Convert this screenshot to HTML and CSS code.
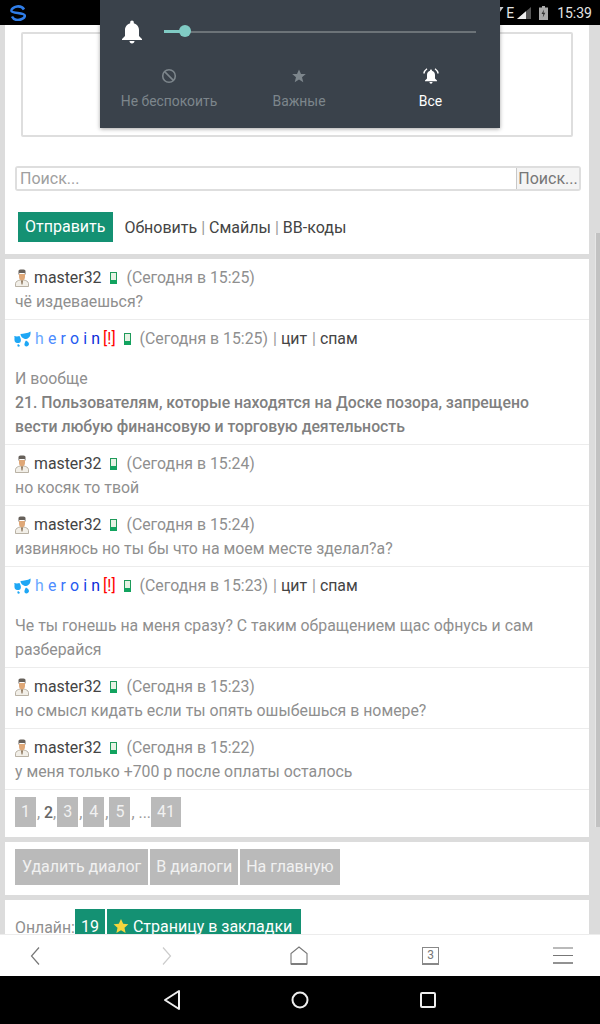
FILE: index.html
```html
<!DOCTYPE html>
<html lang="ru">
<head>
    <meta charset="UTF-8">
    <meta name="viewport" content="width=device-width, initial-scale=1.0">
    <title>Диалог</title>
    <link rel="stylesheet" href="styles.css">
</head>
<body>
    <div class="status-bar">
        <svg class="app-logo" width="16" height="16" viewBox="0 0 16 16" fill="none" stroke="#2f7de8" stroke-width="2.600">
            <path d="M14 4.500C12.500 2 9.500 1.200 7 1.500C3.500 2 1.200 4 1.500 6C2 8.300 14.500 7.700 14.800 10.500C15 13 11 15 8 15C5 15 3 13.500 2 11.500"/>
        </svg>
        <div class="status-right">
            <svg class="wifi" width="6" height="5" viewBox="0 0 6 5"><path d="M0 0H5.500L2 5H0Z" fill="#ddd"/></svg>
            <span class="net">E</span>
            <svg width="14" height="12" viewBox="0 0 14 12"><path d="M14 0V12H0Z" fill="#555"/><path d="M9 4.300V12H0Z" fill="#eee"/></svg>
            <svg class="battery" width="9" height="14" viewBox="0 0 9 14"><path d="M3 0H6V1.500H9V14H0V1.500H3Z" fill="#aaa"/><path d="M5 3.500L2.500 8H4.300L3.800 11.500L6.300 6.800H4.500Z" fill="#333"/></svg>
            <span class="clock">15:39</span>
        </div>
    </div>

    <div class="page">
        <div class="block top-block">
            <div class="ad-box"></div>
            <form class="search">
                <input class="search-input" type="text" placeholder="Поиск...">
                <button class="search-button" type="button">Поиск...</button>
            </form>
            <div class="actions">
                <a class="btn green">Отправить</a>
                <span class="links"><a>Обновить</a> <i>|</i> <a>Смайлы</a> <i>|</i> <a>BB-коды</a></span>
            </div>
        </div>

        <div class="block messages">
            <div class="post">
                <div class="post-head">
                    <svg class="avatar" width="16" height="18" viewBox="0 0 16 18"><use href="#user-ico"/></svg>
                    <a class="nick">master32</a>
                    <svg class="phone" width="7" height="12" viewBox="0 0 7 12"><use href="#phone-ico"/></svg>
                    <span class="time">(Сегодня в 15:25)</span>
                </div>
                <div class="post-text">чё издеваешься?</div>
            </div>
            <div class="post">
                <div class="post-head">
                    <svg class="drops" width="17" height="16" viewBox="0 0 17 16"><use href="#drops-ico"/></svg>
                    <a class="nick-color"><b class="c1">h</b><b class="c2">e</b><b class="c3">r</b><b class="c4">o</b><b class="c5">i</b><b class="c6">n</b></a><span class="warn">[!]</span>
                    <svg class="phone" width="7" height="12" viewBox="0 0 7 12"><use href="#phone-ico"/></svg>
                    <span class="time">(Сегодня в 15:25)</span><i class="sep">|</i><a class="act">цит</a><i class="sep">|</i><a class="act">спам</a>
                </div>
                <div class="post-text spaced">И вообще<br><strong>21. Пользователям, которые находятся на Доске позора, запрещено вести любую финансовую и торговую деятельность</strong></div>
            </div>
            <div class="post">
                <div class="post-head">
                    <svg class="avatar" width="16" height="18" viewBox="0 0 16 18"><use href="#user-ico"/></svg>
                    <a class="nick">master32</a>
                    <svg class="phone" width="7" height="12" viewBox="0 0 7 12"><use href="#phone-ico"/></svg>
                    <span class="time">(Сегодня в 15:24)</span>
                </div>
                <div class="post-text">но косяк то твой</div>
            </div>
            <div class="post">
                <div class="post-head">
                    <svg class="avatar" width="16" height="18" viewBox="0 0 16 18"><use href="#user-ico"/></svg>
                    <a class="nick">master32</a>
                    <svg class="phone" width="7" height="12" viewBox="0 0 7 12"><use href="#phone-ico"/></svg>
                    <span class="time">(Сегодня в 15:24)</span>
                </div>
                <div class="post-text">извиняюсь но ты бы что на моем месте зделал?а?</div>
            </div>
            <div class="post">
                <div class="post-head">
                    <svg class="drops" width="17" height="16" viewBox="0 0 17 16"><use href="#drops-ico"/></svg>
                    <a class="nick-color"><b class="c1">h</b><b class="c2">e</b><b class="c3">r</b><b class="c4">o</b><b class="c5">i</b><b class="c6">n</b></a><span class="warn">[!]</span>
                    <svg class="phone" width="7" height="12" viewBox="0 0 7 12"><use href="#phone-ico"/></svg>
                    <span class="time">(Сегодня в 15:23)</span><i class="sep">|</i><a class="act">цит</a><i class="sep">|</i><a class="act">спам</a>
                </div>
                <div class="post-text spaced">Че ты гонешь на меня сразу? С таким обращением щас офнусь и сам разберайся</div>
            </div>
            <div class="post">
                <div class="post-head">
                    <svg class="avatar" width="16" height="18" viewBox="0 0 16 18"><use href="#user-ico"/></svg>
                    <a class="nick">master32</a>
                    <svg class="phone" width="7" height="12" viewBox="0 0 7 12"><use href="#phone-ico"/></svg>
                    <span class="time">(Сегодня в 15:23)</span>
                </div>
                <div class="post-text">но смысл кидать если ты опять ошыбешься в номере?</div>
            </div>
            <div class="post">
                <div class="post-head">
                    <svg class="avatar" width="16" height="18" viewBox="0 0 16 18"><use href="#user-ico"/></svg>
                    <a class="nick">master32</a>
                    <svg class="phone" width="7" height="12" viewBox="0 0 7 12"><use href="#phone-ico"/></svg>
                    <span class="time">(Сегодня в 15:22)</span>
                </div>
                <div class="post-text">у меня только +700 р после оплаты осталось</div>
            </div>
            <div class="pager">
                <a class="btn grey">1</a><span class="comma">, <b>2</b>,</span><a class="btn grey">3</a><span class="comma">,</span><a class="btn grey">4</a><span class="comma">,</span><a class="btn grey">5</a><span class="comma dots">, ...</span><a class="btn grey">41</a>
            </div>
        </div>

        <div class="block button-row">
            <a class="btn grey">Удалить диалог</a>
            <a class="btn grey narrow">В диалоги</a>
            <a class="btn grey narrow">На главную</a>
        </div>

        <div class="block online">
            <span class="online-label">Онлайн:</span>
            <a class="btn green">19</a>
            <a class="btn green bookmark"><svg class="star" width="16" height="16" viewBox="0 0 16 16"><path d="M8 1L10.200 5.800L15.400 6.300L11.500 9.800L12.600 15L8 12.300L3.400 15L4.500 9.800L.6 6.300L5.800 5.800Z" fill="#f5d63d"/></svg> Страницу в закладки</a>
        </div>
    </div>

    <div class="scrollbar"></div>

    <div class="browser-bar">
        <svg width="14" height="18" viewBox="0 0 14 18" fill="none" stroke="#777" stroke-width="1.200"><path d="M11 0.500L3.500 9L11 17.500"/></svg>
        <svg width="14" height="18" viewBox="0 0 14 18" fill="none" stroke="#ccc" stroke-width="1.200"><path d="M3 0.500L10.500 9L3 17.500"/></svg>
        <svg width="18" height="19" viewBox="0 0 18 19" fill="none" stroke="#777" stroke-width="1.100"><path d="M1 18V7.500L9 1L17 7.500V18Z"/><path d="M1 18H17" stroke-width="1.800"/></svg>
        <span class="tabs">3</span>
        <svg width="20" height="17" viewBox="0 0 20 17" fill="none" stroke="#777" stroke-width="1.100"><path d="M0 1H20M0 8.500H20"/><path d="M0 16H20" stroke-width="1.600"/></svg>
    </div>

    <div class="nav-bar">
        <svg width="18" height="22" viewBox="0 0 18 22" fill="none" stroke="#eee" stroke-width="2"><path d="M16 2V20L2 11Z" stroke-linejoin="round"/></svg>
        <svg width="20" height="20" viewBox="0 0 20 20" fill="none" stroke="#eee" stroke-width="2"><circle cx="10" cy="10" r="7.500"/></svg>
        <svg width="18" height="18" viewBox="0 0 18 18" fill="none" stroke="#eee" stroke-width="2"><rect x="2" y="2" width="14" height="14" rx="1"/></svg>
    </div>

    <!-- шторка громкости поверх страницы -->
    <div class="volume-panel">
        <div class="volume-row">
            <svg width="22" height="24" viewBox="0 0 22 24"><path d="M11 0.500C12 0.500 12.800 1.300 12.800 2.300V3.200C16 4 18 6.800 18 10V16L21 19V20H1V19L4 16V10C4 6.800 6 4 9.200 3.200V2.300C9.200 1.300 10 0.500 11 0.500ZM8.500 21H13.500C13.500 22.500 12.400 23.500 11 23.500C9.600 23.500 8.500 22.500 8.500 21Z" fill="#fff"/></svg>
            <div class="slider">
                <div class="slider-fill"></div>
                <div class="slider-knob"></div>
            </div>
        </div>
        <div class="mode-row">
            <div class="mode">
                <svg width="16" height="16" viewBox="0 0 16 16" fill="none" stroke="#7d868c" stroke-width="1.600"><circle cx="8" cy="8" r="6.300"/><path d="M3.600 3.600L12.400 12.400"/></svg>
                <span>Не беспокоить</span>
            </div>
            <div class="mode">
                <svg width="16" height="16" viewBox="0 0 16 16"><path d="M8 1.500L10 6H14.800L11 9.200L12.300 14.200L8 11.400L3.700 14.200L5 9.200L1.200 6H6Z" fill="#7d868c"/></svg>
                <span>Важные</span>
            </div>
            <div class="mode active">
                <svg width="18" height="16" viewBox="0 1 18 16"><path d="M9 2.500C9.700 2.500 10 3 10 3.700C12.300 4.300 13 6.300 13 8V11.500L15 13.500V14.200H3V13.500L5 11.500V8C5 6.300 5.700 4.300 8 3.700C8 3 8.300 2.500 9 2.500ZM7.500 15H10.500C10.500 16 9.800 16.700 9 16.700C8.200 16.700 7.500 16 7.500 15Z" fill="#fff"/><path d="M5 1.800C3.300 3 2.200 4.600 1.800 6.500M13 1.800C14.700 3 15.800 4.600 16.200 6.500" fill="none" stroke="#fff" stroke-width="1.300"/></svg>
                <span>Все</span>
            </div>
        </div>
    </div>

    <svg class="defs" width="0" height="0">
        <defs>
            <g id="user-ico">
                <path d="M0.500 17.500V14.500C0.500 12.500 3 11.500 5 11H9C11 11.500 13.500 12.500 13.500 14.500V17.500Z" fill="#f2efe8" stroke="#a8a090" stroke-width=".8"/>
                <path d="M4 5H10V8C10 10 8.500 11.500 7 11.500C5.500 11.500 4 10 4 8Z" fill="#dfa878"/>
                <path d="M3.500 6V2C3.500 0.800 5 0.500 7 0.500C9 0.500 10.500 0.800 10.500 2V6L9.500 4H4.500Z" fill="#66605a"/>
                <path d="M6 11.500H8L7.500 15.500H6.500Z" fill="#8a7358"/>
            </g>
            <g id="phone-ico">
                <rect x="0.500" y="0.500" width="6" height="11" fill="#e6f2e4" stroke="#1f9a5a"/>
                <rect x="0" y="8" width="7" height="4" fill="#12a35f"/>
            </g>
            <g id="drops-ico">
                <path d="M16.500 0.500C17 4 15.500 7.500 12 8C9 8 6.500 5.500 6.500 3C9.500 2.500 13.500 2.500 16.500 0.500Z" fill="#1ea7f5"/>
                <path d="M5.500 5C6.500 7 7.500 9 6.500 11C5.500 12.500 2 12.500 0.800 10.500C0 8.500 1 6.500 0.200 5C2 5.500 4 5.500 5.500 5Z" fill="#1ea7f5"/>
                <path d="M12 9.500C13.500 10.500 15 11.500 15 13.300C14.800 15 12.500 16 11 15C9.800 14 10.500 11.500 12 9.500Z" fill="#1ea7f5"/>
                <path d="M4 13C5 13.500 6 14.200 5.800 15C5.300 16 3.800 16 3.400 15C3.200 14.400 3.500 13.700 4 13Z" fill="#1ea7f5"/>
            </g>
        </defs>
    </svg>
</body>
</html>
```

FILE: styles.css
```css
html, body {
    margin: 0;
    padding: 0;
    height: 100%;
}
body {
    font-family: 'Roboto', sans-serif;
    font-size: 15.850px;
    background-color: #dcdcdc;
    color: #8f8f8f;
    height: 1024px;
    overflow: hidden;
    display: flex;
    flex-direction: column;
    position: relative;
}
a {
    color: #444;
    text-decoration: none;
}
i {
    font-style: normal;
}

/* Статус-бар */
.status-bar {
    height: 25px;
    flex: none;
    background-color: #000;
    display: flex;
    justify-content: space-between;
    align-items: center;
    padding: 0 8px 0 10px;
}
.status-right {
    display: flex;
    align-items: center;
    color: #e4e4e4;
}
.wifi {
    margin: -6px 2px 0 0;
}
.net {
    font-size: 14px;
    margin-right: 3px;
}
.battery {
    margin: 0 0 0 8px;
}
.clock {
    font-size: 14px;
    margin-left: 9px;
}

/* Страница */
.page {
    flex: 1;
    min-height: 0;
    overflow: hidden;
    padding: 0 11px 0 5px;
    display: flex;
    flex-direction: column;
    gap: 5px;
}
.block {
    background-color: #fff;
    flex: none;
}
.top-block {
    height: 229px;
    box-sizing: border-box;
    padding: 7px 10px 0;
}
.ad-box {
    height: 101px;
    margin: 0 6px;
    border: 2px solid #dedede;
    border-radius: 2px;
}
.search {
    display: flex;
    margin: 29px -2px 0 0;
    border: 2px solid #dedede;
    border-radius: 3px;
    box-sizing: border-box;
    height: 25px;
}
.search-input {
    flex: 1;
    min-width: 0;
    border: none;
    padding: 0 3px;
    font-family: inherit;
    font-size: 16px;
    outline: none;
}
.search-input::placeholder {
    color: #a0a0a0;
}
.search-button {
    width: 63px;
    padding: 0;
    border: none;
    border-left: 1px solid #c8c8c8;
    background-color: #f4f4f4;
    color: #777;
    font-family: inherit;
    font-size: 16px;
}
.actions {
    margin: 21px 0 0 3px;
    display: flex;
    align-items: center;
}
.btn {
    display: inline-block;
    height: 30px;
    line-height: 30px;
    padding: 0 6px;
    font-size: 16px;
    color: #fff;
}
.green {
    background-color: #149173;
}
.grey {
    background-color: #bababa;
    color: #f1f1f1;
}
.actions .btn {
    padding: 0 8px 0 7px;
}
.links {
    margin-left: 11px;
    font-size: 16px;
    color: #999;
}

/* Сообщения */
.post {
    padding: 7px 10px 0;
    border-bottom: 1px solid #ececec;
    line-height: 24px;
}
.post-head {
    display: flex;
    align-items: center;
    height: 24px;
    white-space: pre;
}
.post-text {
    padding-bottom: 5px;
    max-width: 540px;
}
.post-text strong {
    font-weight: 500;
    font-size: 15.800px;
    color: #808080;
}
.spaced {
    padding-top: 16px;
}
.avatar {
    margin-right: 3px;
}
.drops {
    margin: 0 4px 0 -1px;
}
.nick-color b {
    font-weight: 400;
    margin-right: 4.200px;
}
.nick-color .c1 { color: #6aa8ff; }
.nick-color .c2 { color: #4d8cff; }
.nick-color .c3 { color: #3a74fa; }
.nick-color .c4 { color: #255af0; }
.nick-color .c5 { color: #1440e6; }
.nick-color .c6 { color: #0a28d8; margin-right: 3px; }
.warn {
    color: #f00;
    margin-right: -1px;
}
.phone {
    margin: 0 9px 0 9px;
}
.sep {
    color: #999;
    margin: 0 4px 0 5px;
}
.act {
    color: #444;
}
.pager {
    padding: 7px 10px 8px;
    display: flex;
    font-size: 15.850px;
    line-height: 32px;
}
.pager b {
    font-weight: 500;
    color: #666;
}
.comma {
    color: #999;
    padding: 0 1px;
    white-space: pre;
}
.comma.dots {
    padding-right: 0;
}
.button-row {
    box-sizing: border-box;
    padding: 7px 10px 0;
    height: 53px;
    display: flex;
    gap: 2px;
}
.button-row .btn {
    height: 36px;
    line-height: 36px;
    padding: 0 7px;
}
.button-row .narrow {
    padding: 0 6px;
}
.online {
    padding: 9px 10px 0;
    height: 60px;
    display: flex;
    gap: 2px;
    align-items: flex-start;
}
.online-label {
    line-height: 38px;
    margin-right: -2px;
}
.online .btn {
    height: 36px;
    line-height: 36px;
}
.online .bookmark {
    padding-right: 9px;
}
.star {
    vertical-align: -2px;
}
.scrollbar {
    position: absolute;
    right: 0;
    top: 233px;
    width: 4px;
    height: 594px;
    background-color: #c2c2c2;
    border-left: 1px solid #e6e6e6;
}

/* Нижняя панель браузера */
.browser-bar {
    height: 42px;
    box-sizing: border-box;
    border-top: 1px solid #ececec;
    background-color: #fff;
    display: grid;
    grid-template-columns: repeat(5, 20px);
    justify-content: space-between;
    justify-items: center;
    align-items: center;
    padding: 0 27.500px 0 24.500px;
    position: absolute;
    top: 934px;
    left: 0;
    right: 0;
}
.tabs {
    box-sizing: border-box;
    width: 17px;
    height: 18px;
    border: 1px solid #888;
    border-bottom-width: 2px;
    font-size: 12px;
    line-height: 15px;
    text-align: center;
    color: #777;
}
.nav-bar {
    height: 48px;
    flex: none;
    background-color: #000;
    display: flex;
    align-items: center;
    justify-content: center;
    gap: 109px;
    padding-right: 1px;
}

/* Панель громкости */
.volume-panel {
    position: absolute;
    top: 0;
    left: 100px;
    width: 400px;
    height: 128px;
    background-color: #3a424b;
    box-shadow: 0 1px 4px rgba(0, 0, 0, 0.35);
}
.volume-row {
    display: flex;
    align-items: center;
    height: 64px;
    padding: 0 24px 0 21px;
    box-sizing: border-box;
}
.slider {
    flex: 1;
    height: 2px;
    margin-left: 21px;
    background-color: #6c7378;
    position: relative;
}
.slider-fill {
    position: absolute;
    left: 0;
    top: -1px;
    width: 20px;
    height: 3px;
    background-color: #80cbc4;
}
.slider-knob {
    position: absolute;
    left: 15px;
    top: -6px;
    width: 12px;
    height: 12px;
    border-radius: 50%;
    background-color: #80cbc4;
}
.mode-row {
    display: flex;
    padding-top: 4px;
}
.mode {
    display: flex;
    flex-direction: column;
    align-items: center;
    gap: 9px;
    color: #7d868c;
    font-size: 13.900px;
}
.mode:nth-child(1) {
    width: 134px;
    margin-left: 2px;
}
.mode:nth-child(2) {
    width: 126px;
}
.mode:nth-child(3) {
    width: 137px;
}
.mode.active {
    color: #fff;
}
.defs {
    position: absolute;
}
```
